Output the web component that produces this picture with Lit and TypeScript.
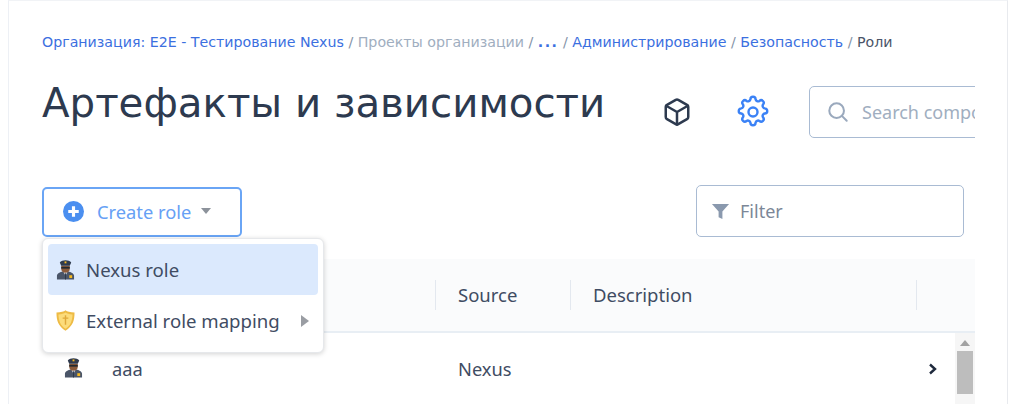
import { LitElement, html, css } from "lit";
import { customElement } from "lit/decorators.js";

const officer = html`<svg class="emoji" viewBox="0 0 20 22" aria-hidden="true">
  <path d="M1 21.500v-4C1 15 4.500 13.600 7 13l3 1.600 3-1.600c2.500.6 6 2 6 4.500v4z" fill="#4a5568"/>
  <path d="M8 13.500h4l-2 4z" fill="#e8eaed"/>
  <rect x="9.500" y="15" width="1" height="6.500" fill="#2d3748"/>
  <rect x="14" y="17" width="3" height="3" fill="#f5b921"/>
  <path d="M5.500 7h9v3.500c0 2.400-2 4-4.500 4s-4.500-1.600-4.500-4z" fill="#8a5a3a"/>
  <path d="M5.500 8.200h9v1.900h-9z" fill="#24292f"/>
  <path d="M4 3.500C6 .5 14 .5 16 3.500L14.500 7h-9z" fill="#2f3a4d"/>
  <rect x="9" y="2.500" width="2" height="2" fill="#f5b921"/>
</svg>`;

const shield = html`<svg class="emoji" viewBox="0 0 20 22" aria-hidden="true">
  <path d="M10 .3c1.600 1.400 5 2.300 9.500 2.300 0 8.500-1.900 14.500-9.500 19.100C2.400 17.100.5 11.100.5 2.600 5 2.600 8.400 1.700 10 .3z" fill="#eebb45"/>
  <path d="M10 2.600c1.400 1 4 1.900 7.400 2-.2 6.300-1.900 11.700-7.400 15-5.500-3.300-7.200-8.700-7.400-15 3.400-.1 6-1 7.400-2z" fill="#fcdc7b"/>
  <path d="M10 5.500v10M7 8.500h6" stroke="#e0a93a" stroke-width="1.500" fill="none"/>
</svg>`;

@customElement("app-root")
export class AppRoot extends LitElement {
  static styles = css`
    :host { display: block; width: 1010px; height: 404px; overflow: hidden; background: #fff; font-family: "Noto Sans", "DejaVu Sans", sans-serif; color: #344054; }
    .panel { box-sizing: border-box; width: 1000px; height: 404px; margin-left: 8px; border-left: 1px solid #edf0f5; border-right: 1px solid #e8eaee; border-top: 1px solid #f1f3f6; padding: 32px 32px 0 33px; position: relative; overflow: hidden; }
    .content { width: 933px; overflow: hidden; }
    .crumbs { font: 14.200px/18px "DejaVu Sans", sans-serif; white-space: nowrap; color: #4a5568; }
    .crumbs a { color: #3b6fe0; }
    .crumbs a.dots { font-weight: 700; letter-spacing: 1.500px; }
    .crumbs .muted { color: #a0aec0; }
    .crumbs .sep { color: #8593a8; }
    .head { display: flex; align-items: flex-start; margin-top: 13px; height: 100px; white-space: nowrap; }
    h1 { margin: 15px 0 0; font: 400 40.300px/50px "DejaVu Sans", sans-serif; color: #2d3a4f; width: 562px; flex: none; }
    .actions { display: flex; align-items: center; height: 52px; margin-top: 22px; flex: none; }
    .ic1 { width: 30px; height: 30px; margin-left: 58px; flex: none; }
    .ic2 { width: 36px; height: 36px; margin-left: 43px; flex: none; }
    .search { box-sizing: border-box; flex: none; width: 260px; height: 52px; margin-left: 38px; border: 1px solid #a9bbd3; border-radius: 5px; display: flex; align-items: center; padding-left: 17px; gap: 13px; font-size: 18px; color: #a0aec0; }
    .search svg { width: 22px; height: 22px; flex: none; }
    .tools { display: flex; justify-content: space-between; align-items: flex-start; margin-top: 21px; width: 922px; }
    .create { box-sizing: border-box; width: 200px; height: 50px; margin-top: 2px; border: 2px solid #6aa5f5; border-radius: 5px; display: flex; align-items: center; padding-left: 19px; padding-bottom: 2px; font-size: 18.300px; color: #66a0f5; }
    .create svg.plus { width: 21px; height: 21px; margin-right: 13px; flex: none; }
    .caret { width: 0; height: 0; border-left: 5.500px solid transparent; border-right: 5.500px solid transparent; border-top: 6px solid #8c929b; margin-left: 10px; }
    .filter { box-sizing: border-box; width: 268px; height: 52px; border: 1px solid #a9bbd3; border-radius: 5px; display: flex; align-items: center; padding-left: 14px; gap: 10px; font-size: 18px; color: #7c8798; }
    .filter svg { width: 19px; height: 19px; flex: none; }
    .table { margin-top: 22px; }
    .thead { display: grid; grid-template-columns: 394px 135px 346px 58px; height: 74px; background: #fafbfc; border-bottom: 2px solid #e8eef4; box-sizing: border-box; align-items: center; font-size: 18.500px; color: #3f4c63; }
    .th { height: 30px; line-height: 30px; border-right: 1px solid #e3e8ef; padding-left: 22px; box-sizing: border-box; }
    .th.first { padding-left: 0; }
    .th.last { border: 0; }
    .row { display: flex; height: 72px; font-size: 18.300px; color: #3f4c63; }
    .cells { flex: 1; display: grid; grid-template-columns: 70px 346px 135px 1fr 27px; height: 72px; }
    .cell { height: 72px; line-height: 72px; box-sizing: border-box; }
    .cell.ico { padding: 24px 0 0 22px; }
    .cell.ico .emoji { display: block; }
    .chev { padding: 30px 0 0 0; }
    .chev svg { display: block; width: 10px; height: 12px; }
    .scroll { width: 20px; flex: none; background: #f6f6f6; }
    .up { width: 0; height: 0; border-left: 5.500px solid transparent; border-right: 5.500px solid transparent; border-bottom: 6px solid #a2a2a2; margin: 7px auto 0; }
    .thumb { width: 16px; height: 43px; background: #bdbdbd; margin: 5px auto 0; }
    .menu { position: absolute; left: 33px; top: 237px; box-sizing: border-box; width: 282px; height: 115px; background: #fff; border-radius: 6px; border: 1px solid #e6e8eb; box-shadow: 0 1px 5px rgba(0,0,0,.18); padding: 5px; display: flex; flex-direction: column; font-size: 18.600px; color: #3f4c63; }
    .item { height: 51px; flex: none; border-radius: 4px; display: flex; align-items: center; padding-left: 8px; gap: 11px; white-space: nowrap; }
    .item.on { background: #dbe9fd; }
    .emoji { width: 19px; height: 21px; flex: none; }
    .sub { width: 0; height: 0; border-top: 6px solid transparent; border-bottom: 6px solid transparent; border-left: 8px solid #9a9da3; margin-left: 10px; }
  `;

  render() {
    return html`<div class="panel">
      <div class="content">
        <div class="crumbs"><a>Организация: E2E - Тестирование Nexus</a> <span class="sep">/</span> <span class="muted">Проекты организации</span> <span class="sep">/</span> <a class="dots">...</a> <span class="sep">/</span> <a>Администрирование</a> <span class="sep">/</span> <a>Безопасность</a> <span class="sep">/</span> Роли</div>
        <div class="head">
          <h1>Артефакты и зависимости</h1>
          <div class="actions">
            <svg class="ic1" viewBox="0 0 24 24" fill="none" stroke="#2d3a4f" stroke-width="2" stroke-linejoin="round" stroke-linecap="round">
              <path d="M21 16V8a2 2 0 0 0-1-1.730l-7-4a2 2 0 0 0-2 0l-7 4A2 2 0 0 0 3 8v8a2 2 0 0 0 1 1.730l7 4a2 2 0 0 0 2 0l7-4A2 2 0 0 0 21 16z"/>
              <path d="M3.300 7 12 12l8.700-5M12 22V12"/>
            </svg>
            <svg class="ic2" viewBox="0 0 24 24" fill="none" stroke="#3b82f6" stroke-width="1.600" stroke-linejoin="round" stroke-linecap="round">
              <circle cx="12" cy="12" r="3"/>
              <path d="M10.300 3.500a1.700 1.700 0 0 1 3.400 0 1.700 1.700 0 0 0 2.600 1.100 1.700 1.700 0 0 1 2.400 2.400 1.700 1.700 0 0 0 1.100 2.600 1.700 1.700 0 0 1 0 3.400 1.700 1.700 0 0 0-1.100 2.600 1.700 1.700 0 0 1-2.400 2.400 1.700 1.700 0 0 0-2.600 1.100 1.700 1.700 0 0 1-3.400 0 1.700 1.700 0 0 0-2.600-1.100 1.700 1.700 0 0 1-2.400-2.400 1.700 1.700 0 0 0-1.100-2.600 1.700 1.700 0 0 1 0-3.400 1.700 1.700 0 0 0 1.100-2.600 1.700 1.700 0 0 1 2.400-2.400 1.700 1.700 0 0 0 2.600-1.100z"/>
            </svg>
            <div class="search">
              <svg viewBox="0 0 24 24" fill="none" stroke="#9aa9bd" stroke-width="2.200" stroke-linecap="round"><circle cx="10.500" cy="10.500" r="8"/><path d="m16.500 16.500 5 5"/></svg>
              <span>Search components</span>
            </div>
          </div>
        </div>
        <div class="tools">
          <div class="create">
            <svg class="plus" viewBox="0 0 20 20"><circle cx="10" cy="10" r="10" fill="#4b8ff0"/><path d="M10 5v10M5 10h10" stroke="#fff" stroke-width="3"/></svg>
            <span>Create role</span><span class="caret"></span>
          </div>
          <div class="filter">
            <svg viewBox="0 0 20 20"><path d="M1 2h18l-7 8v8l-4-2v-6z" fill="#8a99ae"/></svg>
            <span>Filter</span>
          </div>
        </div>
        <div class="table">
          <div class="thead">
            <div class="th first"></div>
            <div class="th">Source</div>
            <div class="th">Description</div>
            <div class="th last"></div>
          </div>
          <div class="row">
            <div class="cells">
              <div class="cell ico">${officer}</div>
              <div class="cell">aaa</div>
              <div class="cell">Nexus</div>
              <div class="cell"></div>
              <div class="cell chev"><svg viewBox="0 0 10 12"><path d="m2 1.500 5 4.500-5 4.500" fill="none" stroke="#1f2a3d" stroke-width="2.400"/></svg></div>
            </div>
            <div class="scroll"><div class="up"></div><div class="thumb"></div></div>
          </div>
        </div>
      </div>
      <div class="menu">
        <div class="item on">${officer}<span>Nexus role</span></div>
        <div class="item">${shield}<span>External role mapping</span><span class="sub"></span></div>
      </div>
    </div>`;
  }
}
